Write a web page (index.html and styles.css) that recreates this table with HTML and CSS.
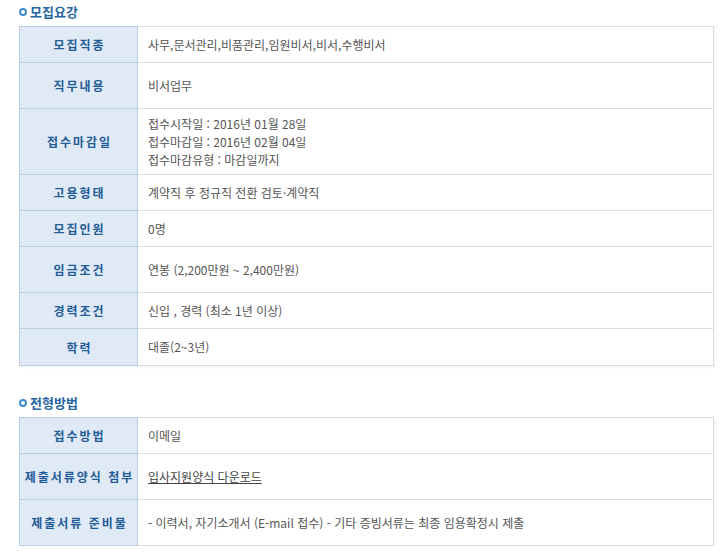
FILE: index.html
```html
<!DOCTYPE html>
<html lang="ko">
<head>
<meta charset="utf-8">
<title>모집요강</title>
<link rel="stylesheet" href="styles.css">
</head>
<body>
<div class="page">
  <section class="sec first">
    <h3 class="sec-title"><span class="dot"></span>모집요강</h3>
    <table class="info">
      <tr class="h36"><th>모집직종</th><td>사무,문서관리,비품관리,임원비서,비서,수행비서</td></tr>
      <tr class="h46"><th>직무내용</th><td>비서업무</td></tr>
      <tr class="h66"><th>접수마감일</th><td>접수시작일 : 2016년 01월 28일<br>접수마감일 : 2016년 02월 04일<br>접수마감유형 : 마감일까지</td></tr>
      <tr class="h36"><th>고용형태</th><td>계약직 후 정규직 전환 검토·계약직</td></tr>
      <tr class="h36"><th>모집인원</th><td>0명</td></tr>
      <tr class="h46"><th>임금조건</th><td>연봉 (2,200만원 ~ 2,400만원)</td></tr>
      <tr class="h36"><th>경력조건</th><td>신입 , 경력 (최소 1년 이상)</td></tr>
      <tr class="h37"><th>학력</th><td>대졸(2~3년)</td></tr>
    </table>
  </section>
  <section class="sec second">
    <h3 class="sec-title"><span class="dot"></span>전형방법</h3>
    <table class="info">
      <tr class="h36"><th>접수방법</th><td>이메일</td></tr>
      <tr class="h46"><th>제출서류양식 첨부</th><td><a class="dl" href="#">입사지원양식 다운로드</a></td></tr>
      <tr class="h46"><th>제출서류 준비물</th><td>- 이력서, 자기소개서 (E-mail 접수) - 기타 증빙서류는 최종 임용확정시 제출</td></tr>
    </table>
  </section>
</div>
</body>
</html>
```

FILE: styles.css
```css
html, body {
  margin: 0;
  padding: 0;
  background: #ffffff;
}
body {
  font-family: "Noto Sans CJK KR", "Noto Sans", sans-serif;
  font-size: 12px;
  color: #555555;
}
.page {
  padding: 0 0 0 19px;
  width: 695px;
}
.sec.first {
  padding-top: 4px;
}
.sec.second {
  padding-top: 29px;
}
.sec-title {
  margin: 0 0 6px 0;
  height: 16px;
  line-height: 16px;
  font-size: 13px;
  font-weight: bold;
  color: #2566a3;
  display: flex;
  align-items: center;
  gap: 3px;
}
.dot {
  display: inline-block;
  width: 4px;
  height: 4px;
  border: 2.5px solid #3d8ccb;
  border-radius: 50%;
  background: #ffffff;
}
.info {
  width: 695px;
  border-collapse: collapse;
  table-layout: fixed;
  box-shadow: 2px 2px 2px rgba(0, 0, 0, 0.04);
}
.info th {
  width: 117px;
  background: #dfeaf6;
  border: 1px solid #b9cde2;
  color: #1f5b97;
  font-weight: bold;
  letter-spacing: 2px;
  text-indent: 2px;
  text-align: center;
  padding: 0;
  white-space: nowrap;
}
.info td {
  border: 1px solid #dcdcdc;
  border-left: 1px solid #b9cde2;
  padding: 0 10px;
  line-height: 18px;
  vertical-align: middle;
}
.h36 th, .h36 td { height: 35px; }
.h37 th, .h37 td { height: 36px; }
.h46 th, .h46 td { height: 45px; }
.h66 th, .h66 td { height: 65px; }
.dl {
  color: #444444;
  text-decoration: underline;
}
```
